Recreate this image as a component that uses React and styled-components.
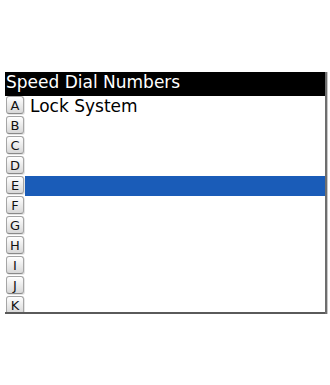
import React from "react";
import styled, { createGlobalStyle } from "styled-components";

const letters = ["A", "B", "C", "D", "E", "F", "G", "H", "I", "J", "K"];
const labels = { A: "Lock System" };
const selected = "E";

const App = () => {
  return (
    <>
      <GlobalStyle />
      <Screen>
        <Panel>
          <Header>Speed Dial Numbers</Header>
          <List>
            {letters.map((l) => (
              <Row key={l}>
                <Key>{l}</Key>
                <Label $active={l === selected}>{labels[l] || ""}</Label>
              </Row>
            ))}
          </List>
        </Panel>
      </Screen>
    </>
  );
};

const GlobalStyle = createGlobalStyle`
  html, body {
    margin: 0;
    padding: 0;
    background: #fff;
  }
  body {
    font-family: "DejaVu Sans", "Liberation Sans", sans-serif;
  }
`;

const Screen = styled.div`
  width: 330px;
  height: 385px;
  padding-top: 72px;
  padding-left: 5px;
  box-sizing: border-box;
`;

const Panel = styled.div`
  width: 320px;
  display: flex;
  flex-direction: column;
  box-shadow: 2px 0 0 #6e6e6e, 3px 0 0 #c8c8c8;
  border-bottom: 2px solid #5a5a5a;
`;

const Header = styled.div`
  height: 24px;
  background: #000;
  color: #fff;
  font-size: 17px;
  line-height: 21px;
  padding-left: 1px;
  box-sizing: border-box;
  white-space: nowrap;
`;

const List = styled.div`
  height: 216px;
  overflow: hidden;
  display: flex;
  flex-direction: column;
`;

const Row = styled.div`
  height: 20px;
  flex: 0 0 20px;
  display: flex;
  align-items: stretch;
`;

const Key = styled.div`
  width: 18px;
  height: 18px;
  margin-left: 1px;
  margin-top: 0;
  box-sizing: border-box;
  border: 1px solid #a6a6a6;
  border-bottom-color: #8a8a8a;
  border-radius: 3px;
  background: linear-gradient(#ffffff, #d8d8d8);
  box-shadow: 1px 1px 0 #e4e4e4;
  color: #111;
  font-size: 13px;
  line-height: 17px;
  text-align: center;
  flex-shrink: 0;
`;

const Label = styled.div`
  flex: 1;
  margin-left: 1px;
  padding-left: 5px;
  font-size: 17px;
  line-height: 20px;
  color: #000;
  white-space: nowrap;
  background: ${(p) => (p.$active ? "#1a5cb8" : "transparent")};
`;

export default App;
